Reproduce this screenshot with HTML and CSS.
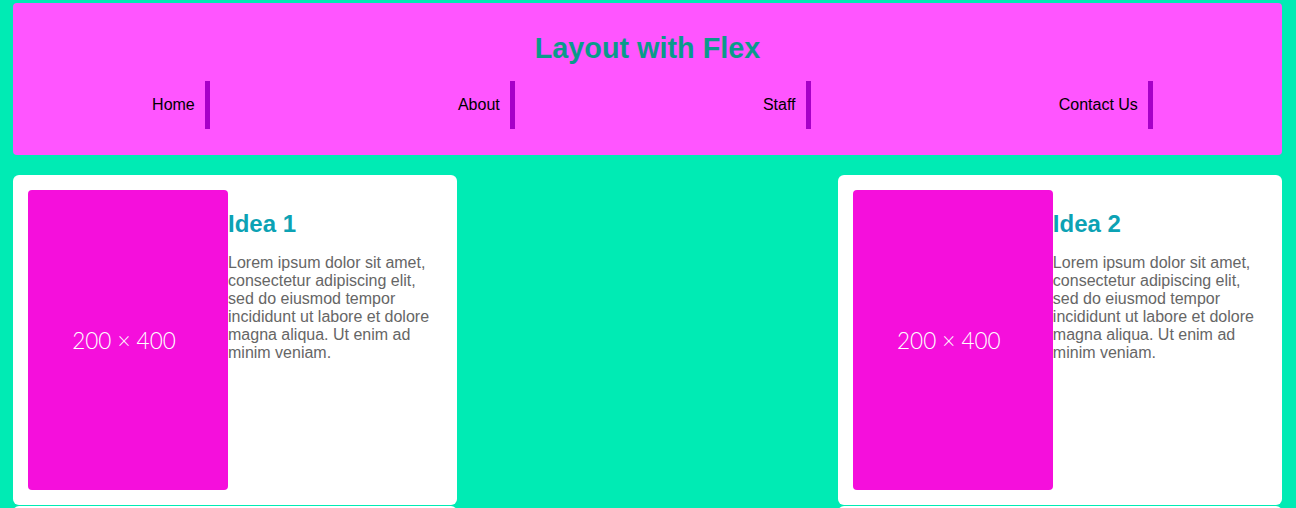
FILE: index.html
```html
<!DOCTYPE html>
<html>
<head>
<meta charset="utf-8">
<title>Layout with Flex</title>
<link rel="stylesheet" href="styles.css">
</head>
<body>
<header class="header">
  <h1 class="title">Layout with Flex</h1>
  <nav class="nav">
    <a class="nav-item" href="#">Home</a>
    <a class="nav-item" href="#">About</a>
    <a class="nav-item" href="#">Staff</a>
    <a class="nav-item" href="#">Contact Us</a>
  </nav>
</header>
<main class="cards">
  <article class="card">
    <div class="thumb">200 × 400</div>
    <div class="card-body">
      <h2 class="card-title">Idea 1</h2>
      <p class="card-text">Lorem ipsum dolor sit amet, consectetur adipiscing elit, sed do eiusmod tempor incididunt ut labore et dolore magna aliqua. Ut enim ad minim veniam.</p>
    </div>
  </article>
  <article class="card">
    <div class="thumb">200 × 400</div>
    <div class="card-body">
      <h2 class="card-title">Idea 2</h2>
      <p class="card-text">Lorem ipsum dolor sit amet, consectetur adipiscing elit, sed do eiusmod tempor incididunt ut labore et dolore magna aliqua. Ut enim ad minim veniam.</p>
    </div>
  </article>
  <article class="card">
    <div class="thumb">200 × 400</div>
    <div class="card-body">
      <h2 class="card-title">Idea 3</h2>
      <p class="card-text">Lorem ipsum dolor sit amet, consectetur adipiscing elit, sed do eiusmod tempor incididunt ut labore et dolore magna aliqua. Ut enim ad minim veniam.</p>
    </div>
  </article>
  <article class="card">
    <div class="thumb">200 × 400</div>
    <div class="card-body">
      <h2 class="card-title">Idea 4</h2>
      <p class="card-text">Lorem ipsum dolor sit amet, consectetur adipiscing elit, sed do eiusmod tempor incididunt ut labore et dolore magna aliqua. Ut enim ad minim veniam.</p>
    </div>
  </article>
</main>
</body>
</html>
```

FILE: styles.css
```css
html {
  background: #00ebb4;
}

body {
  margin: 0;
  padding: 3px 14px 0 13px;
  font-family: "Liberation Sans", Arial, sans-serif;
  font-size: 16px;
  background: #00ebb4;
}

.header {
  background: #ff55ff;
  border-radius: 4px;
  padding: 8px 10px;
}

.title {
  margin: 20.8px 0 16.1px;
  text-align: center;
  font-size: 28.8px;
  font-weight: bold;
  color: #0a9a8a;
  line-height: 1.15;
}

.nav {
  display: flex;
  justify-content: space-around;
  margin-bottom: 18px;
}

.nav-item {
  display: block;
  padding: 15px 10px;
  border-right: 5px solid #a600c8;
  color: #000;
  text-decoration: none;
  line-height: 18px;
}

.cards {
  display: flex;
  flex-wrap: wrap;
  justify-content: space-between;
  row-gap: 1px;
  margin-top: 20px;
}

.card {
  width: 35%;
  box-sizing: border-box;
  display: flex;
  align-items: flex-start;
  background: #fff;
  border-radius: 6px;
  padding: 15px;
}

.thumb {
  flex: 0 0 200px;
  box-sizing: border-box;
  height: 300px;
  padding-right: 8px;
  background: #f50fdc;
  border-radius: 4px;
  color: #fff;
  font-family: Lato, "Liberation Sans", sans-serif;
  font-weight: 300;
  font-size: 22.5px;
  display: flex;
  align-items: center;
  justify-content: center;
}

.card-body {
  flex: 1;
}

.card-title {
  margin: 20px 0 16px;
  font-size: 24px;
  font-weight: bold;
  color: #0ca2b4;
  line-height: 1.15;
}

.card-text {
  margin: 0;
  color: #666;
  line-height: 18px;
}
```
